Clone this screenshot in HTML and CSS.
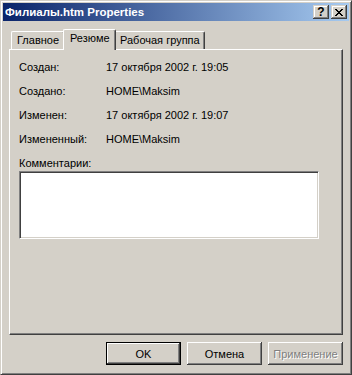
FILE: index.html
```html
<!DOCTYPE html>
<html>
<head>
<meta charset="utf-8">
<link rel="stylesheet" href="styles.css">
</head>
<body>
<div class="window">
  <div class="titlebar">
    <span class="title">Филиалы.htm Properties</span>
    <div class="caption-buttons">
      <div class="cap-btn help">?</div>
      <div class="cap-btn close">
        <svg width="8" height="7" viewBox="0 0 8 7"><path d="M0 0h2v1h-2z M6 0h2v1h-2z M1 1h2v1h-2z M5 1h2v1h-2z M2 2h4v1h-4z M3 3h2v1h-2z M2 4h4v1h-4z M1 5h2v1h-2z M5 5h2v1h-2z M0 6h2v1h-2z M6 6h2v1h-2z" fill="#000"/></svg>
      </div>
    </div>
  </div>

  <div class="client">
    <div class="tabs">
      <div class="tab tab-main">Главное</div>
      <div class="tab tab-summary active">Резюме</div>
      <div class="tab tab-group">Рабочая группа</div>
    </div>

    <div class="panel">
      <div class="row"><span class="label">Создан:</span><span class="value">17 октября 2002 г. 19:05</span></div>
      <div class="row"><span class="label">Создано:</span><span class="value">HOME\Maksim</span></div>
      <div class="row"><span class="label">Изменен:</span><span class="value">17 октября 2002 г. 19:07</span></div>
      <div class="row"><span class="label">Измененный:</span><span class="value">HOME\Maksim</span></div>
      <div class="comments-label">Комментарии:</div>
      <div class="comments"></div>
    </div>

    <div class="buttons">
      <div class="btn default">OK</div>
      <div class="btn">Отмена</div>
      <div class="btn disabled">Применение</div>
    </div>
  </div>
</div>
</body>
</html>
```

FILE: styles.css
```css
html, body {
  margin: 0;
  padding: 0;
  background: #d4d0c8;
}

body {
  font-family: "Liberation Sans", Arial, sans-serif;
  font-size: 11px;
  color: #000;
}

.window {
  width: 352px;
  height: 375px;
  box-sizing: border-box;
  background: #d4d0c8;
  border: 1px solid;
  border-color: #d4d0c8 #404040 #404040 #d4d0c8;
  box-shadow: inset 1px 1px #fff, inset -1px -1px #808080;
  padding: 2px;
  display: flex;
  flex-direction: column;
}

.titlebar {
  height: 18px;
  background: linear-gradient(to right, #0a246a, #a6caf0);
  display: flex;
  align-items: center;
  justify-content: space-between;
  padding-left: 2px;
  padding-right: 2px;
}

.title {
  color: #fff;
  font-weight: bold;
  font-size: 11.5px;
}

.caption-buttons {
  display: flex;
  gap: 2px;
}

.cap-btn {
  width: 16px;
  height: 14px;
  background: #d4d0c8;
  box-shadow: inset -1px -1px #404040, inset 1px 1px #d4d0c8, inset -2px -2px #808080, inset 2px 2px #fff;
  display: flex;
  align-items: center;
  justify-content: center;
  box-sizing: border-box;
}

.help {
  font-weight: bold;
  font-size: 12px;
  line-height: 14px;
  padding-bottom: 1px;
}

.client {
  flex: 1;
  display: flex;
  flex-direction: column;
  padding: 8px 6px 7px 6px;
}

.tabs {
  height: 20px;
  display: flex;
  align-items: flex-end;
  padding-left: 2px;
  position: relative;
  z-index: 1;
}

.tab {
  height: 18px;
  box-sizing: border-box;
  background: #d4d0c8;
  border-left: 1px solid #fff;
  border-top: 1px solid #fff;
  border-right: 1px solid #404040;
  box-shadow: inset -1px 0 #808080;
  border-radius: 2px 2px 0 0;
  padding-left: 5px;
  line-height: 16px;
  white-space: nowrap;
}

.tab-main {
  width: 54px;
}

.tab-summary {
  width: 49px;
}

.tab-group {
  width: 91px;
}

.tab.active {
  height: 21px;
  width: 53px;
  margin: 0 -2px -1px -2px;
  padding-left: 6px;
  line-height: 17px;
  position: relative;
  z-index: 2;
}

.panel {
  height: 286px;
  box-sizing: border-box;
  border-left: 1px solid #fff;
  border-top: 1px solid #fff;
  border-right: 1px solid #404040;
  border-bottom: 1px solid #404040;
  box-shadow: inset -1px -1px #808080;
  padding: 11px 9px 0 9px;
}

.row {
  display: flex;
  height: 13px;
  line-height: 13px;
  margin-bottom: 11px;
}

.label {
  width: 87px;
}

.comments-label {
  margin-top: 2px;
  height: 13px;
  line-height: 13px;
}

.comments {
  margin-top: 1px;
  width: 300px;
  height: 68px;
  box-sizing: border-box;
  background: #fff;
  border: 1px solid;
  border-color: #808080 #fff #fff #808080;
  box-shadow: inset 1px 1px #404040, inset -1px -1px #d4d0c8;
}

.buttons {
  margin-top: 7px;
  display: flex;
  justify-content: flex-end;
  gap: 6px;
}

.btn {
  width: 75px;
  height: 23px;
  box-sizing: border-box;
  background: #d4d0c8;
  box-shadow: inset -1px -1px #404040, inset 1px 1px #fff, inset -2px -2px #808080;
  display: flex;
  align-items: center;
  justify-content: center;
}

.btn.default {
  border: 1px solid #000;
}

.btn.disabled {
  color: #808080;
  text-shadow: 1px 1px #fff;
}
```
